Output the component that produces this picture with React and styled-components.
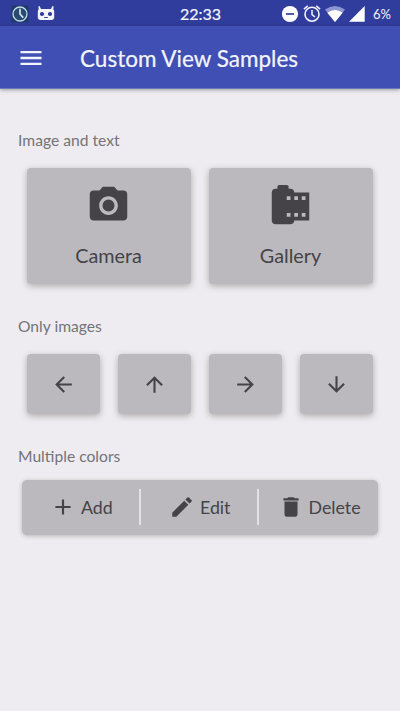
import React from 'react';
import styled, { createGlobalStyle } from 'styled-components';

const GlobalStyle = createGlobalStyle`
  * { box-sizing: border-box; }
  body { margin: 0; background: #eeecf0; font-family: Lato, sans-serif; }
`;

const Screen = styled.div`
  width: 400px;
  height: 711px;
  overflow: hidden;
  background: #eeecf0;
`;

const StatusBar = styled.header`
  display: grid;
  grid-template-columns: 1fr auto 1fr;
  align-items: center;
  height: 26px;
  padding: 1px 9px 0 11px;
  background: #303d9c;
  color: #f4f5fc;
`;

const StatusGroup = styled.div`
  display: flex;
  align-items: center;
  justify-content: ${(p) => (p.$end ? 'flex-end' : 'flex-start')};
  gap: ${(p) => (p.$end ? 4 : 8)}px;
`;

const Clock = styled.time`
  padding-right: 1px;
  font-size: 16px;
  line-height: 24px;
  -webkit-text-stroke: 0.2px currentColor;
`;

const Battery = styled.span`
  margin-left: 4px;
  font-size: 13px;
  line-height: 24px;
`;

const AppBar = styled.div`
  display: flex;
  align-items: center;
  height: 63px;
  padding: 0 18px 0 17px;
  background: #3f4fb4;
  border-bottom: 1px solid #6c76bd;
  box-shadow: 0 1px 4px rgba(0, 0, 0, 0.35);
`;

const MenuButton = styled.button`
  display: flex;
  margin: 0 35px 0 0;
  padding: 1px 0 0;
  border: 0;
  background: none;
  color: #f2f3fc;
`;

const Title = styled.h1`
  margin: 4px 0 0;
  font-size: 22.5px;
  font-weight: 400;
  line-height: 28px;
  -webkit-text-stroke: 0.2px currentColor;
  color: #f4f5fc;
  white-space: nowrap;
`;

const Content = styled.main`
  display: flex;
  flex-direction: column;
  padding: 41px 22px 0 18px;
`;

const Label = styled.h2`
  margin: 0;
  font-size: 15.65px;
  font-weight: 400;
  line-height: 20px;
  color: #757378;
`;

const CardGrid = styled.div`
  display: grid;
  grid-template-columns: repeat(${(p) => p.$columns}, 1fr);
  gap: 18px;
  margin: 18px 5px 0 9px;
  padding-bottom: 32px;
`;

const Card = styled.button`
  display: flex;
  flex-direction: column;
  align-items: center;
  justify-content: ${(p) => (p.$tall ? 'flex-start' : 'center')};
  gap: 15px;
  height: ${(p) => (p.$tall ? 116 : 60)}px;
  padding: ${(p) => (p.$tall ? '15px 1px 0 0' : '0')};
  border: 0;
  border-radius: 4px;
  background: #bbb9be;
  color: #454347;
  font: 19.8px/24px Lato, sans-serif;
  box-shadow: 0 2px 6px rgba(60, 50, 50, 0.35);
`;

const Segments = styled.div`
  display: grid;
  grid-template-columns: 119px 118px 1fr;
  height: 55px;
  margin: 14px 0 0 4px;
  border-radius: 5px;
  background: #bbb9be;
  box-shadow: 0 1px 4px rgba(60, 50, 50, 0.3);
`;

const Segment = styled.button`
  display: flex;
  align-items: center;
  gap: 5px;
  margin: 9px 0 10px;
  padding: 0 0 0 ${(p) => p.$inset}px;
  border: 0;
  border-right: ${(p) => (p.$last ? 0 : 2)}px solid #e3e1e5;
  background: none;
  color: #454347;
  font: 17.8px/24px Lato, sans-serif;
`;

const Glyph = styled.svg`
  display: block;
  flex: none;
  width: ${(p) => p.$size}px;
  height: ${(p) => p.$size}px;
  fill: currentColor;
`;

const ICONS = {
  menu: 'M3 18h18v-2H3v2zm0-5h18v-2H3v2zm0-7v2h18V6H3z',
  camera:
    'M9 2L7.17 4H4c-1.1 0-2 .9-2 2v12c0 1.1.9 2 2 2h16c1.1 0 2-.9 2-2V6c0-1.1-.9-2-2-2h-3.17L15 2H9zm3 15c-2.76 0-5-2.24-5-5s2.24-5 5-5 5 2.24 5 5-2.24 5-5 5zM15.2 12a3.2 3.2 0 1 1-6.4 0 3.2 3.2 0 0 1 6.4 0z',
  roll:
    'M14 5c0-1.1-.9-2-2-2h-1V2c0-.55-.45-1-1-1H6c-.55 0-1 .45-1 1v1H4c-1.1 0-2 .9-2 2v15c0 1.1.9 2 2 2h8c1.1 0 2-.9 2-2h8V5h-8zm-2 13h-2v-2h2v2zm0-9h-2V7h2v2zm4 9h-2v-2h2v2zm0-9h-2V7h2v2zm4 9h-2v-2h2v2zm0-9h-2V7h2v2z',
  left: 'M20 11H7.83l5.59-5.59L12 4l-8 8 8 8 1.41-1.41L7.83 13H20v-2z',
  up: 'M4 12l1.41 1.41L11 7.83V20h2V7.83l5.58 5.59L20 12l-8-8-8 8z',
  right: 'M12 4l-1.41 1.41L16.17 11H4v2h12.17l-5.58 5.59L12 20l8-8z',
  down: 'M20 12l-1.41-1.41L13 16.17V4h-2v12.17l-5.58-5.59L4 12l8 8 8-8z',
  add: 'M19 13h-6v6h-2v-6H5v-2h6V5h2v6h6v2z',
  edit:
    'M3 17.25V21h3.75L17.81 9.94l-3.75-3.75L3 17.25zM20.71 7.04a1 1 0 0 0 0-1.41l-2.34-2.34a1 1 0 0 0-1.41 0l-1.83 1.83 3.75 3.75 1.83-1.83z',
  trash:
    'M6 19c0 1.1.9 2 2 2h8c1.1 0 2-.9 2-2V7H6v12zM19 4h-3.5l-1-1h-5l-1 1H5v2h14V4z',
};

const Icon = ({ name, size }) => (
  <Glyph $size={size} viewBox="0 0 24 24" aria-hidden="true">
    <path d={ICONS[name]} />
  </Glyph>
);

const ClockAppIcon = () => (
  <svg width="18" height="18" viewBox="0 0 18 18" aria-hidden="true">
    <rect x="0.5" y="0.5" width="17" height="17" rx="1" fill="#1d3a68" />
    <circle cx="9" cy="9" r="7" fill="#284b72" stroke="#c3dbe7" strokeWidth="1.3" />
    <path d="M9 3.8V9l3.2 3.6" fill="none" stroke="#dcebf2" strokeWidth="1.6" />
  </svg>
);

const RobotIcon = () => (
  <svg width="18" height="18" viewBox="0 0 18 18" aria-hidden="true">
    <path
      fill="#f4f5fc"
      fillRule="evenodd"
      d="M1.4 1.5L2.6 1L4 4H14L15.4 1L16.6 1.5L16.3 4.6Q17.2 5.2 17.2 6.5V12.5Q17.2 14.9 14.8 14.9H3.2Q0.8 14.9 0.8 12.5V6.5Q0.8 5.2 1.7 4.6ZM5 6.9a2.1 2.1 0 1 0 .01 0ZM13 6.9a2.1 2.1 0 1 0 .01 0ZM7.2 12.1h3.6v1h-3.6Z"
    />
  </svg>
);

const DoNotDisturbIcon = () => (
  <svg width="18" height="18" viewBox="0 0 18 18" aria-hidden="true">
    <circle cx="9" cy="9" r="8.1" fill="#fff" />
    <path d="M5 9h8" stroke="#303d9c" strokeWidth="1.7" />
  </svg>
);

const AlarmIcon = () => (
  <svg width="18" height="18" viewBox="0 0 18 18" aria-hidden="true">
    <g fill="none" stroke="#f4f5fc">
      <circle cx="9" cy="9.2" r="7" strokeWidth="1.6" />
      <path d="M9 5v4.6l3 2.4M0.9 4.1L4.8 0.9M17.1 4.1L13.2 0.9" strokeWidth="1.5" />
    </g>
  </svg>
);

const WifiIcon = () => (
  <svg width="20" height="18" viewBox="0 0 20 18" aria-hidden="true">
    <path d="M0 4.5Q10 -2.5 20 4.5L10 17Z" fill="#8d96d2" />
    <path d="M2.3 7.7Q10 2.5 17.7 7.7L10 17Z" fill="#fff" />
  </svg>
);

const SignalIcon = () => (
  <svg width="16" height="18" viewBox="0 0 16 18" aria-hidden="true">
    <path d="M0 16.7L15.7 1V16.7Z" fill="#fff" />
  </svg>
);

export default function App() {
  return (
    <Screen>
      <GlobalStyle />
      <StatusBar>
        <StatusGroup>
          <ClockAppIcon />
          <RobotIcon />
        </StatusGroup>
        <Clock>22:33</Clock>
        <StatusGroup $end>
          <DoNotDisturbIcon />
          <AlarmIcon />
          <WifiIcon />
          <SignalIcon />
          <Battery>6%</Battery>
        </StatusGroup>
      </StatusBar>
      <AppBar>
        <MenuButton aria-label="Menu">
          <Icon name="menu" size={28} />
        </MenuButton>
        <Title>Custom View Samples</Title>
      </AppBar>
      <Content>
        <Label>Image and text</Label>
        <CardGrid $columns={2}>
          <Card $tall>
            <Icon name="camera" size={45} />
            Camera
          </Card>
          <Card $tall>
            <Icon name="roll" size={45} />
            Gallery
          </Card>
        </CardGrid>
        <Label>Only images</Label>
        <CardGrid $columns={4}>
          {['left', 'up', 'right', 'down'].map((name) => (
            <Card key={name} aria-label={name}>
              <Icon name={name} size={25} />
            </Card>
          ))}
        </CardGrid>
        <Label>Multiple colors</Label>
        <Segments>
          <Segment $inset={28}>
            <Icon name="add" size={26} />
            Add
          </Segment>
          <Segment $inset={28}>
            <Icon name="edit" size={26} />
            Edit
          </Segment>
          <Segment $inset={18.5} $last>
            <Icon name="trash" size={26} />
            Delete
          </Segment>
        </Segments>
      </Content>
    </Screen>
  );
}
